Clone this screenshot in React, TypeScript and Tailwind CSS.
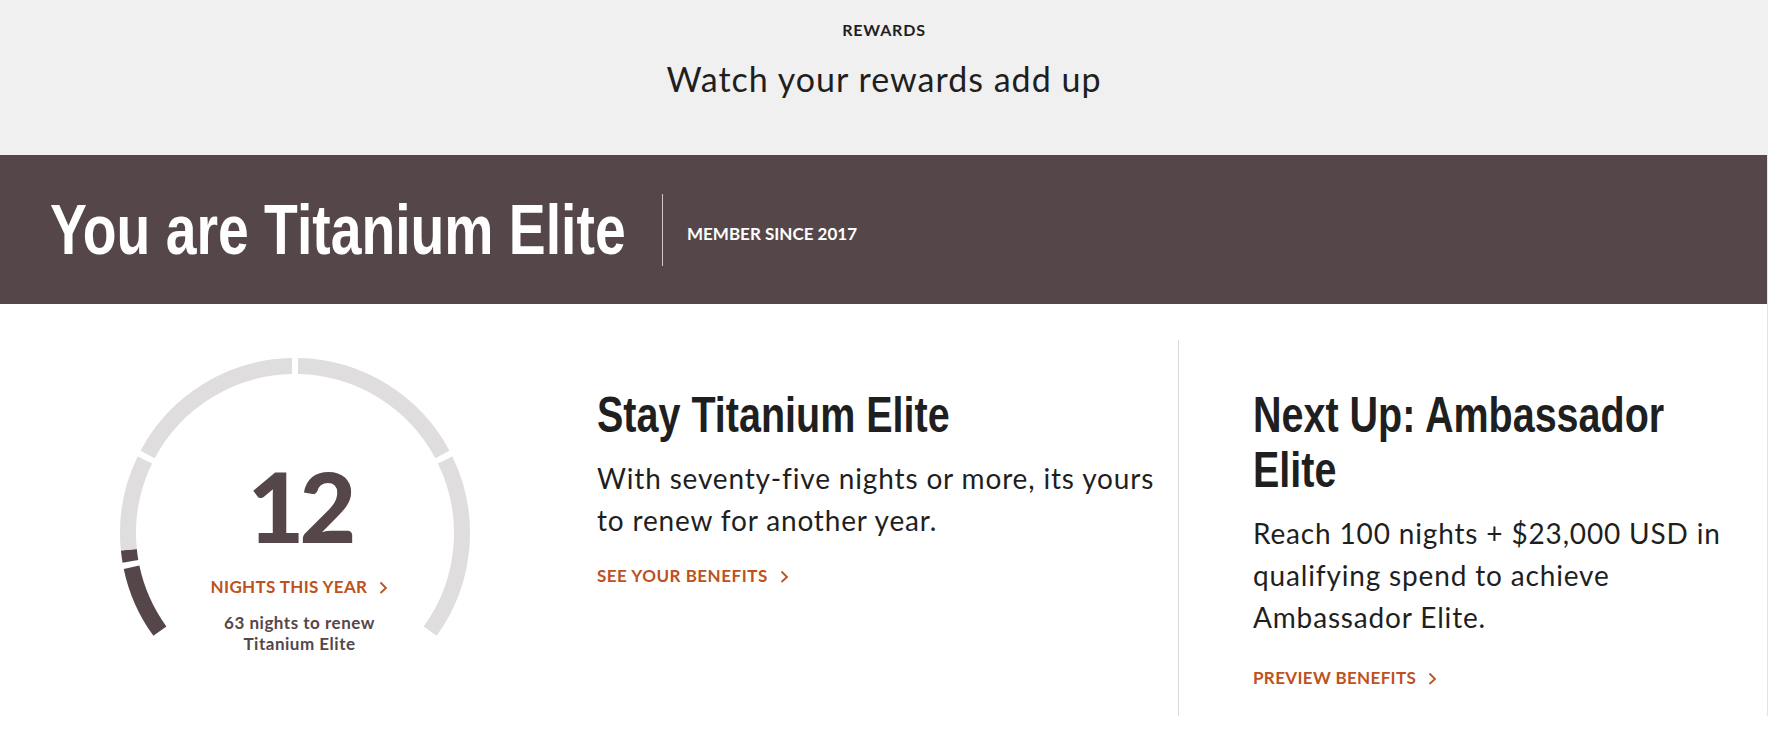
const CX = 180;
const CY = 180;
const R = 167;

// gauge runs from 216deg (0 nights) clockwise to -36deg (100 nights)
const ang = (n: number) => ((216 - 2.52 * n) * Math.PI) / 180;
const pt = (n: number) => [CX + R * Math.cos(ang(n)), CY - R * Math.sin(ang(n))];

function arc(a: number, b: number) {
  const [x1, y1] = pt(a);
  const [x2, y2] = pt(b);
  const large = (b - a) * 2.52 > 180 ? 1 : 0;
  return `M ${x1.toFixed(2)} ${y1.toFixed(2)} A ${R} ${R} 0 ${large} 1 ${x2.toFixed(2)} ${y2.toFixed(2)}`;
}

const tiers = [0, 10, 25, 50, 75, 100];
const nights = 12;

const Chevron = () => (
  <svg width="9" height="13" viewBox="0 0 9 13" className="ml-3 mt-[6px] shrink-0">
    <path d="M1.5 1.5 L7 7 L1.5 12" fill="none" stroke="currentColor" strokeWidth="1.8" />
  </svg>
);

const Gauge = () => {
  const segs: { d: string; dark: boolean }[] = [];
  for (let i = 0; i < tiers.length - 1; i++) {
    const a = tiers[i] === 0 ? 0 : tiers[i] + 0.41;
    const b = tiers[i + 1] === 100 ? 100 : tiers[i + 1] - 0.41;
    if (nights <= a) {
      segs.push({ d: arc(a, b), dark: false });
    } else if (nights >= b) {
      segs.push({ d: arc(a, b), dark: true });
    } else {
      segs.push({ d: arc(a, nights), dark: true });
      segs.push({ d: arc(nights, b), dark: false });
    }
  }
  return (
    <svg width="360" height="300" viewBox="0 0 360 300" className="col-start-1 row-start-1">
      {segs.map((s, i) => (
        <path key={i} d={s.d} fill="none" stroke={s.dark ? "#554749" : "#dfdddd"} strokeWidth="16" />
      ))}
    </svg>
  );
};

const condensed = "font-['Liberation_Sans','Arial',sans-serif] font-bold origin-left";

export default function App() {
  return (
    <div className="min-h-[742px] bg-white font-['Lato','Liberation_Sans',sans-serif] text-[#1f1f1f]">
      <header className="flex h-[155px] flex-col items-center bg-[#f0f0f0] pt-5">
        <p className="text-[16px] font-bold leading-5 tracking-[0.05em]">REWARDS</p>
        <h1 className="mt-[19px] text-[34px] leading-10 tracking-[0.03em]">Watch your rewards add up</h1>
      </header>

      <div className="flex">
        <div className="flex-1">
          <section className="flex h-[149px] items-center bg-[#554749] pl-[50px] text-white">
            <div className="w-[573px]">
              <h2 className={`${condensed} whitespace-nowrap scale-x-[0.79] text-[70px] leading-none`}>
                You are Titanium Elite
              </h2>
            </div>
            <div className="ml-[39px] h-[72px] w-px bg-[#cfc7c8]" />
            <p className="ml-6 mt-2 text-[17px] font-bold">MEMBER SINCE 2017</p>
          </section>

          <main className="grid grid-cols-3 pt-9">
            <div className="flex justify-center pt-[13px]">
              <div className="grid">
                <Gauge />
                <div className="col-start-1 row-start-1 flex flex-col items-center pl-[10px] pt-[103px] text-[#554749]">
                  <span className="text-[98px] font-black leading-none tracking-[-0.05em]">12</span>
                  <a className="mt-[21px] flex text-[17px] font-bold leading-6 tracking-[0.02em] text-[#bd5220]">
                    NIGHTS THIS YEAR
                    <Chevron />
                  </a>
                  <p className="mt-[13px] text-center text-[17px] font-bold leading-[21px] tracking-[0.03em]">
                    63 nights to renew
                    <br />
                    Titanium Elite
                  </p>
                </div>
              </div>
            </div>

            <div className="pl-2 pt-12">
              <h3 className={`${condensed} whitespace-nowrap scale-x-[0.79] text-[50px] leading-[55px]`}>
                Stay Titanium Elite
              </h3>
              <p className="mt-[14px] text-[28px] leading-[42px] tracking-[0.03em]">
                With seventy-five nights or more, its yours to renew for another year.
              </p>
              <a className="mt-[23px] flex text-[17px] font-bold leading-6 tracking-[0.03em] text-[#bd5220]">
                SEE YOUR BENEFITS
                <Chevron />
              </a>
            </div>

            <div className="border-l border-[#d9d9d9] pb-[26px] pl-[74px] pt-12">
              <div className="w-[500px]">
                <h3 className={`${condensed} w-[560px] scale-x-[0.79] text-[50px] leading-[55px]`}>
                  Next Up: Ambassador Elite
                </h3>
                <p className="mt-[14px] text-[28px] leading-[42px] tracking-[0.03em]">
                  Reach 100 nights + $23,000 USD in qualifying spend to achieve Ambassador Elite.
                </p>
                <a className="mt-[28px] flex text-[17px] font-bold leading-6 tracking-[0.02em] text-[#bd5220]">
                  PREVIEW BENEFITS
                  <Chevron />
                </a>
              </div>
            </div>
          </main>
        </div>
        <div className="w-px bg-[#e4e4e4]" />
      </div>
    </div>
  );
}
